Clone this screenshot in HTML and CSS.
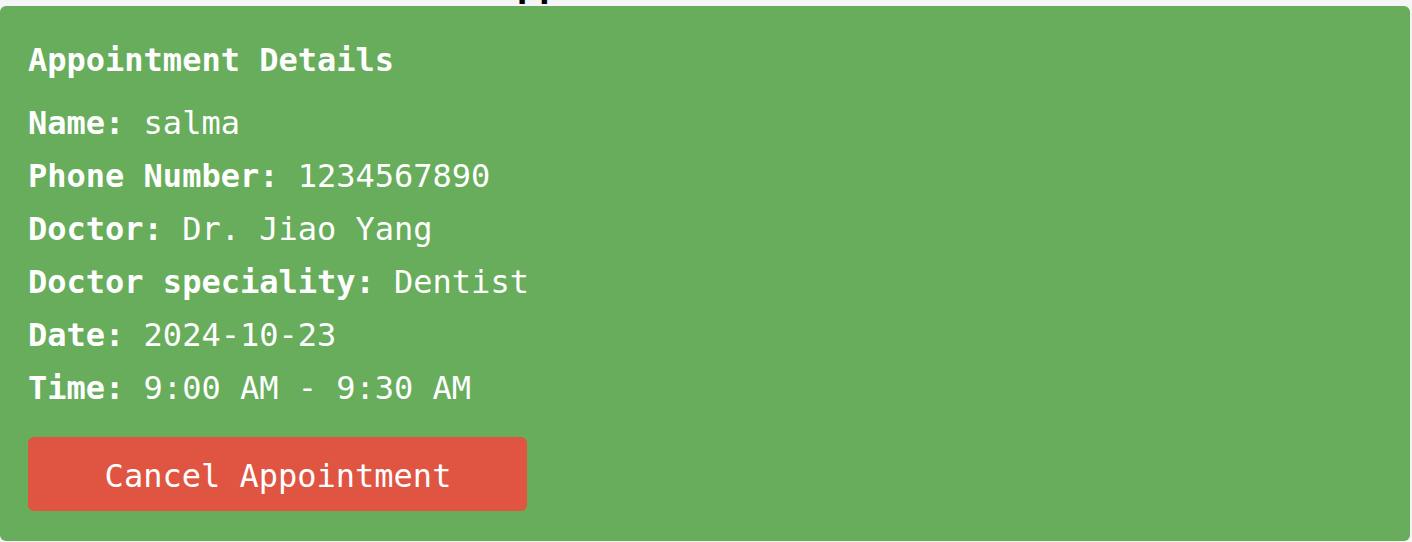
FILE: index.html
```html
<!DOCTYPE html>
<html lang="en">
<head>
<meta charset="utf-8">
<title>Appointment Details</title>
<link rel="stylesheet" href="styles.css">
</head>
<body>
  <h1 class="page-title">Appointment Details</h1>
  <section class="card">
    <h2 class="card-title">Appointment Details</h2>
    <p class="row"><strong>Name:</strong> salma</p>
    <p class="row"><strong>Phone Number:</strong> 1234567890</p>
    <p class="row"><strong>Doctor:</strong> Dr. Jiao Yang</p>
    <p class="row"><strong>Doctor speciality:</strong> Dentist</p>
    <p class="row"><strong>Date:</strong> 2024-10-23</p>
    <p class="row"><strong>Time:</strong> 9:00 AM - 9:30 AM</p>
    <button class="cancel-btn" type="button">Cancel Appointment</button>
  </section>
</body>
</html>
```

FILE: styles.css
```css
html, body {
  margin: 0;
  padding: 0;
  background: #f5f5f5;
  overflow: hidden;
}

body {
  font-family: "DejaVu Sans Mono", "Liberation Mono", monospace;
  color: #000;
}

.page-title {
  margin: -38px 0 1px;
  font-size: 37px;
  line-height: 43px;
  font-weight: 700;
  text-align: center;
}

.card {
  margin: 0 2px 0 0;
  background: #67ad5c;
  border-radius: 6px;
  padding: 28px 28px 30px;
  color: #fff;
  display: flex;
  flex-direction: column;
  align-items: flex-start;
}

.card-title {
  margin: 0 0 10px;
  font-size: 32px;
  line-height: 53px;
  font-weight: 700;
}

.row {
  margin: 0;
  font-size: 32px;
  line-height: 53px;
  font-weight: 400;
}

.row strong {
  font-weight: 700;
}

.cancel-btn {
  margin-top: 22px;
  width: 499px;
  height: 74px;
  border: 0;
  border-radius: 6px;
  background: #e05442;
  color: #fff;
  font-family: inherit;
  font-size: 32px;
  padding: 4px 0 0 1px;
  cursor: pointer;
}
```
